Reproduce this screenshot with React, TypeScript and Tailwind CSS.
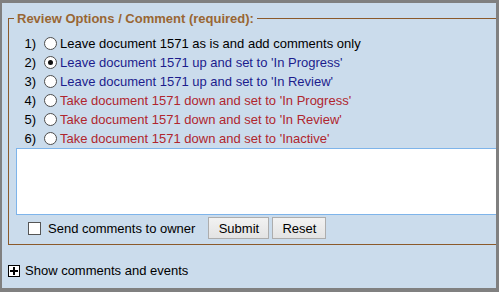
import React from 'react';

const options = [
  { label: 'Leave document 1571 as is and add comments only', color: 'text-black', checked: false },
  { label: "Leave document 1571 up and set to 'In Progress'", color: 'text-[#1c1c8c]', checked: true },
  { label: "Leave document 1571 up and set to 'In Review'", color: 'text-[#1c1c8c]', checked: false },
  { label: "Take document 1571 down and set to 'In Progress'", color: 'text-[#b0262e]', checked: false },
  { label: "Take document 1571 down and set to 'In Review'", color: 'text-[#b0262e]', checked: false },
  { label: "Take document 1571 down and set to 'Inactive'", color: 'text-[#b0262e]', checked: false },
];

const Radio = ({ checked }: { checked: boolean }) => (
  <span className="flex h-[13px] w-[13px] items-center justify-center rounded-full border border-[#4d4d4d] bg-white">
    {checked && <span className="h-[5px] w-[5px] rounded-full bg-[#111]" />}
  </span>
);

const App = () => {
  return (
    <div className="h-[292px] w-[499px] bg-[#808080] pt-[3px] pl-[2px] pr-[3px] pb-[4px] font-['Liberation_Sans',Arial,sans-serif] text-[13px] leading-[15px]">
      <div className="h-full w-full overflow-hidden bg-[#cbdcec] pl-[6px] pt-[8px]">
        {/* Review fieldset */}
        <fieldset className="w-[520px] border border-[#8b5a2b] px-[5px] pb-[5px]">
          <legend className="px-[3px] font-bold text-[#996633]">Review Options / Comment (required):</legend>

          <div className="pt-[8px]">
            {options.map((opt, i) => (
              <div key={i} className="flex h-[19px] items-center">
                <span className="w-[22px] text-right text-black">{i + 1})</span>
                <span className="ml-[8px]">
                  <Radio checked={opt.checked} />
                </span>
                <span className={`ml-[3px] ${opt.color}`}>{opt.label}</span>
              </div>
            ))}
          </div>

          <textarea className="ml-[2px] block h-[67px] w-[500px] resize-none border border-[#7eb4ea] bg-white outline-none" />

          <div className="mt-[2px] flex h-[22px] items-center">
            <span className="ml-[14px] h-[13px] w-[13px] border border-[#555] bg-white" />
            <span className="ml-[7px] text-black">Send comments to owner</span>
            <button className="ml-[13px] h-[22px] w-[61px] border border-[#adadad] bg-gradient-to-b from-[#f2f2f2] to-[#e3e3e3] text-black">
              Submit
            </button>
            <button className="ml-[3px] h-[22px] w-[54px] border border-[#adadad] bg-gradient-to-b from-[#f2f2f2] to-[#e3e3e3] text-black">
              Reset
            </button>
          </div>
        </fieldset>

        {/* Toggle */}
        <div className="mt-[18px] flex items-center">
          <span className="relative h-[12px] w-[12px] border border-black bg-white">
            <span className="absolute left-[1px] top-[4px] h-[2px] w-[8px] bg-black" />
            <span className="absolute left-[4px] top-[1px] h-[8px] w-[2px] bg-black" />
          </span>
          <span className="ml-[5px] text-black">Show comments and events</span>
        </div>
      </div>
    </div>
  );
};

export default App;
